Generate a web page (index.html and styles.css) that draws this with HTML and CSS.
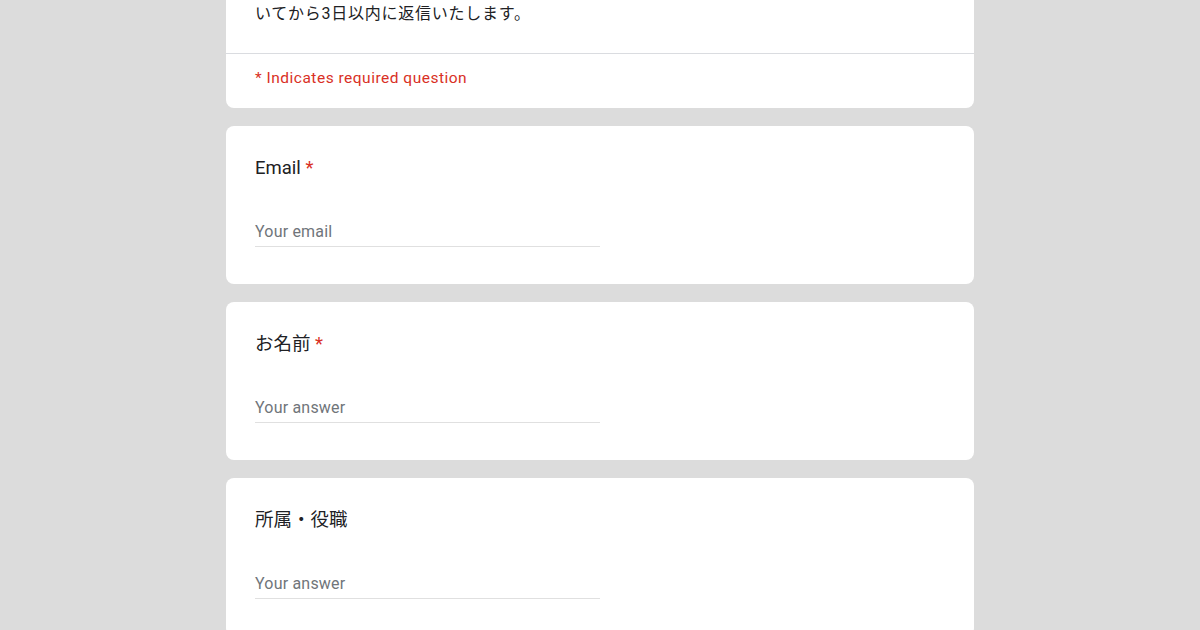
FILE: index.html
```html
<!DOCTYPE html>
<html lang="ja">
<head>
<meta charset="utf-8">
<link rel="stylesheet" href="styles.css">
</head>
<body>
<main class="form">
  <section class="card intro">
    <div class="intro-desc">いてから3日以内に返信いたします。</div>
    <div class="intro-required">* Indicates required question</div>
  </section>
  <section class="card question">
    <div class="q-title">Email <span class="req">*</span></div>
    <div class="q-input">Your email</div>
  </section>
  <section class="card question">
    <div class="q-title">お名前 <span class="req">*</span></div>
    <div class="q-input">Your answer</div>
  </section>
  <section class="card question">
    <div class="q-title">所属・役職</div>
    <div class="q-input">Your answer</div>
  </section>
</main>
</body>
</html>
```
FILE: styles.css
```css
html, body {
  margin: 0;
  padding: 0;
  background: #dcdcdc;
  height: 630px;
  overflow: hidden;
}
body {
  font-family: Roboto, "Noto Sans CJK JP", sans-serif;
  color: #202124;
}
.form {
  width: 748px;
  margin: -30px auto 0;
  display: flex;
  flex-direction: column;
  gap: 18px;
}
.card {
  background: #ffffff;
  border-radius: 8px;
}
.intro-desc {
  padding: 32px 29px 27px;
  font-size: 16px;
  line-height: 24px;
  letter-spacing: 0.75px;
  border-bottom: 1px solid #dadce0;
}
.intro-required {
  padding: 14px 29px 20px;
  font-size: 15.5px;
  line-height: 20px;
  color: #d93025;
  letter-spacing: 0.5px;
}
.question {
  padding: 30px 29px 37px;
  height: 158px;
  box-sizing: border-box;
}
.q-title {
  font-size: 18.5px;
  line-height: 24px;
  color: #202124;
}
.req {
  color: #d93025;
}
.q-input {
  margin-top: 37px;
  width: 345px;
  height: 30px;
  line-height: 30px;
  box-sizing: border-box;
  border-bottom: 1px solid #e0e0e0;
  font-size: 16px;
  color: #70757a;
  letter-spacing: 0.2px;
}
```
